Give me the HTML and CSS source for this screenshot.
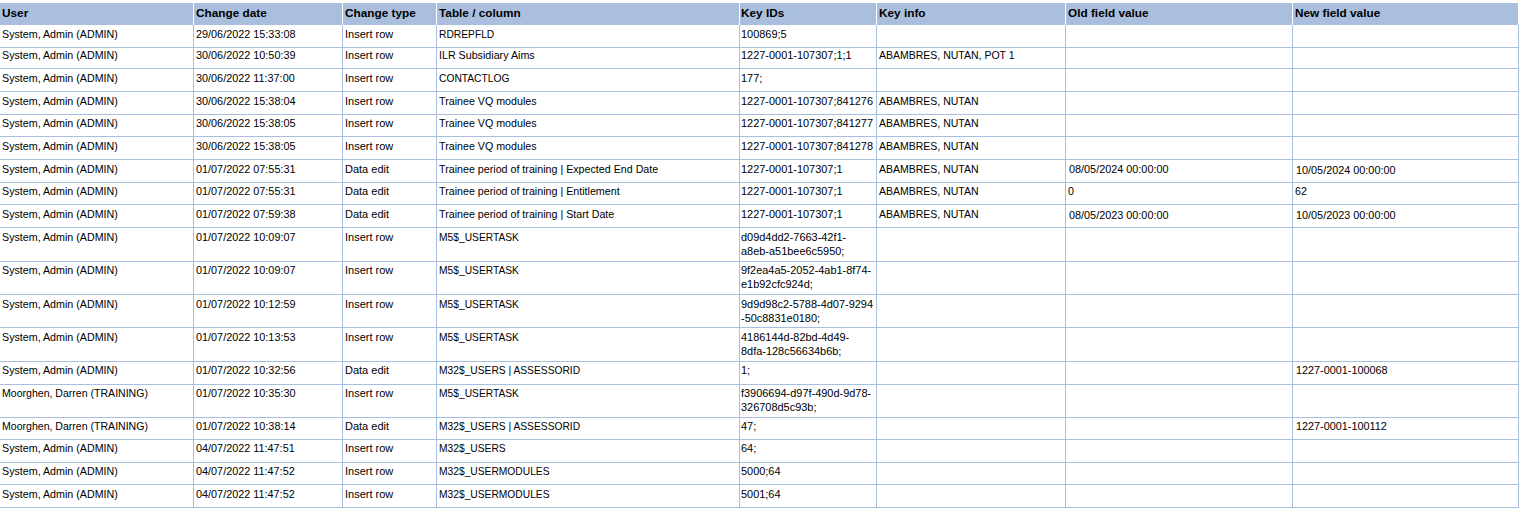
FILE: index.html
```html
<!DOCTYPE html>
<html lang="en">
<head>
<meta charset="utf-8">
<title>Audit log</title>
<link rel="stylesheet" href="styles.css">
</head>
<body>
<table class="log">
<colgroup><col class="c1"><col class="c2"><col class="c3"><col class="c4"><col class="c5"><col class="c6"><col class="c7"><col class="c8"></colgroup>
<thead><tr><th>User</th><th>Change date</th><th>Change type</th><th>Table / column</th><th>Key IDs</th><th>Key info</th><th>Old field value</th><th>New field value</th></tr></thead>
<tbody>
<tr class="h23"><td>System, Admin (ADMIN)</td><td>29/06/2022 15:33:08</td><td>Insert row</td><td class="caps">RDREPFLD</td><td>100869;5</td><td></td><td></td><td></td></tr>
<tr class="h21 tighter"><td>System, Admin (ADMIN)</td><td>30/06/2022 10:50:39</td><td>Insert row</td><td>ILR Subsidiary Aims</td><td>1227-0001-107307;1;1</td><td>ABAMBRES, NUTAN, POT 1</td><td></td><td></td></tr>
<tr class="h23"><td>System, Admin (ADMIN)</td><td>30/06/2022 11:37:00</td><td>Insert row</td><td class="caps">CONTACTLOG</td><td>177;</td><td></td><td></td><td></td></tr>
<tr class="h23"><td>System, Admin (ADMIN)</td><td>30/06/2022 15:38:04</td><td>Insert row</td><td>Trainee VQ modules</td><td>1227-0001-107307;841276</td><td>ABAMBRES, NUTAN</td><td></td><td></td></tr>
<tr class="h22 tight"><td>System, Admin (ADMIN)</td><td>30/06/2022 15:38:05</td><td>Insert row</td><td>Trainee VQ modules</td><td>1227-0001-107307;841277</td><td>ABAMBRES, NUTAN</td><td></td><td></td></tr>
<tr class="h23"><td>System, Admin (ADMIN)</td><td>30/06/2022 15:38:05</td><td>Insert row</td><td>Trainee VQ modules</td><td>1227-0001-107307;841278</td><td>ABAMBRES, NUTAN</td><td></td><td></td></tr>
<tr class="h23"><td>System, Admin (ADMIN)</td><td>01/07/2022 07:55:31</td><td>Data edit</td><td>Trainee period of training | Expected End Date</td><td>1227-0001-107307;1</td><td>ABAMBRES, NUTAN</td><td class="val">08/05/2024 00:00:00</td><td class="val low">10/05/2024 00:00:00</td></tr>
<tr class="h22 tight"><td>System, Admin (ADMIN)</td><td>01/07/2022 07:55:31</td><td>Data edit</td><td>Trainee period of training | Entitlement</td><td>1227-0001-107307;1</td><td>ABAMBRES, NUTAN</td><td>0</td><td>62</td></tr>
<tr class="h23"><td>System, Admin (ADMIN)</td><td>01/07/2022 07:59:38</td><td>Data edit</td><td>Trainee period of training | Start Date</td><td>1227-0001-107307;1</td><td>ABAMBRES, NUTAN</td><td class="val low">08/05/2023 00:00:00</td><td class="val low">10/05/2023 00:00:00</td></tr>
<tr class="h34"><td>System, Admin (ADMIN)</td><td>01/07/2022 10:09:07</td><td>Insert row</td><td class="caps">M5$_USERTASK</td><td>d09d4dd2-7663-42f1-<br>a8eb-a51bee6c5950;</td><td></td><td></td><td></td></tr>
<tr class="h33 tight"><td>System, Admin (ADMIN)</td><td>01/07/2022 10:09:07</td><td>Insert row</td><td class="caps">M5$_USERTASK</td><td>9f2ea4a5-2052-4ab1-8f74-<br>e1b92cfc924d;</td><td></td><td></td><td></td></tr>
<tr class="h33"><td>System, Admin (ADMIN)</td><td>01/07/2022 10:12:59</td><td>Insert row</td><td class="caps">M5$_USERTASK</td><td>9d9d98c2-5788-4d07-9294<br>-50c8831e0180;</td><td></td><td></td><td></td></tr>
<tr class="h34"><td>System, Admin (ADMIN)</td><td>01/07/2022 10:13:53</td><td>Insert row</td><td class="caps">M5$_USERTASK</td><td>4186144d-82bd-4d49-<br>8dfa-128c56634b6b;</td><td></td><td></td><td></td></tr>
<tr class="h23 tight"><td>System, Admin (ADMIN)</td><td>01/07/2022 10:32:56</td><td>Data edit</td><td class="caps">M32$_USERS | ASSESSORID</td><td>1;</td><td></td><td></td><td class="val">1227-0001-100068</td></tr>
<tr class="h33 tight"><td class="name">Moorghen, Darren (TRAINING)</td><td>01/07/2022 10:35:30</td><td>Insert row</td><td class="caps">M5$_USERTASK</td><td>f3906694-d97f-490d-9d78-<br>326708d5c93b;</td><td></td><td></td><td></td></tr>
<tr class="h22 tight"><td class="name">Moorghen, Darren (TRAINING)</td><td>01/07/2022 10:38:14</td><td>Data edit</td><td class="caps">M32$_USERS | ASSESSORID</td><td>47;</td><td></td><td></td><td class="val">1227-0001-100112</td></tr>
<tr class="h23 tight"><td>System, Admin (ADMIN)</td><td>04/07/2022 11:47:51</td><td>Insert row</td><td class="caps">M32$_USERS</td><td>64;</td><td></td><td></td><td></td></tr>
<tr class="h22 tight"><td>System, Admin (ADMIN)</td><td>04/07/2022 11:47:52</td><td>Insert row</td><td class="caps">M32$_USERMODULES</td><td>5000;64</td><td></td><td></td><td></td></tr>
<tr class="h23"><td>System, Admin (ADMIN)</td><td>04/07/2022 11:47:52</td><td>Insert row</td><td class="caps">M32$_USERMODULES</td><td>5001;64</td><td></td><td></td><td></td></tr>
</tbody>
</table>
</body>
</html>
```
FILE: styles.css
```css
html, body { margin: 0; padding: 0; background: #fff; }
body { padding-top: 3px; font-family: "Liberation Sans", Arial, sans-serif; color: #000; }
.log { table-layout: fixed; width: 1519px; border-collapse: separate; border-spacing: 0; font-size: 10.7px; }
.c1 { width: 194px; } .c2 { width: 149px; } .c3 { width: 94px; } .c4 { width: 303px; }
.c5 { width: 137px; } .c6 { width: 189px; } .c7 { width: 227px; } .c8 { width: 226px; }
.log th { height: 22px; padding: 0 2px 2px; background: #a9bfdd; border-right: 1px solid #fff; font-size: 11.8px; font-weight: bold; text-align: left; box-sizing: border-box; }
.log td { padding: 3px 2px 0; vertical-align: top; line-height: 13.5px; border-right: 1px solid #a9bfdf; border-bottom: 1px solid #a9bfdf; box-sizing: border-box; white-space: nowrap; }
.log th:nth-child(5), .log td:nth-child(5) { padding-left: 1px; }
.log td:nth-child(2) { font-size: 10.85px; }
.log td:nth-child(3) { font-size: 11px; }
.log td:nth-child(5) { font-size: 10.95px; }
.log td.val { font-size: 10.85px; }
.log td:nth-child(6) { font-size: 10.5px; }
.log td.caps { font-size: 10.25px; }
.log td.name { font-size: 10.55px; }
.log tr.tight td { padding-top: 2px; }
.log tr.tighter td { padding-top: 1px; }
.log td.val { padding-left: 3px; }
.log td.low { padding-top: 4px; }
.h21 td { height: 21px; } .h22 td { height: 22px; } .h23 td { height: 23px; }
.h33 td { height: 33px; } .h34 td { height: 34px; }
```
